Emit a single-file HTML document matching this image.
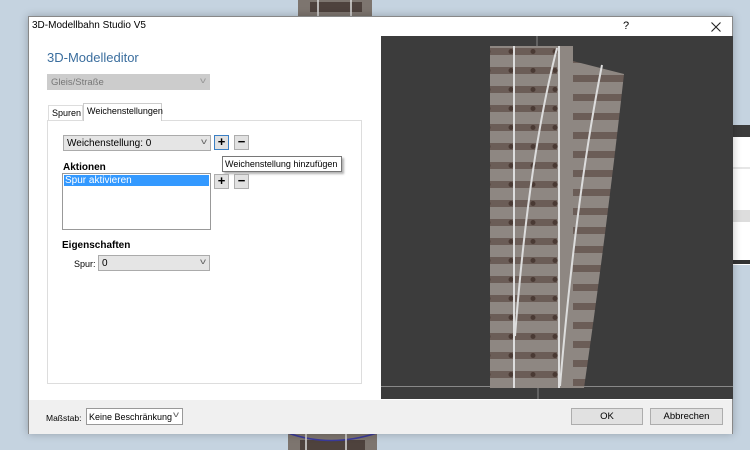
<!DOCTYPE html>
<html><head><meta charset="utf-8"><style>
*{margin:0;padding:0;box-sizing:border-box}
body{width:750px;height:450px;overflow:hidden;background:#c5d3e0;font-family:"Liberation Sans",sans-serif;font-size:9.5px;color:#000;position:relative}
.a{position:absolute}
.dlg{left:28px;top:16px;width:705px;height:418px;background:#fff;border:1px solid #888;box-shadow:0 0 8px rgba(0,0,0,.25)}
.btn{background:#e1e1e1;border:1px solid #adadad;text-align:center}
.combo{border:1px solid #ababab;background:#e5e5e5}
.chev{position:absolute;right:4px;top:1px;color:#666;font-size:8px;transform:scaleX(1.5)}
</style></head><body>
<svg class="a" style="left:0;top:0" width="750" height="450">
<rect x="298" y="0" width="74" height="16" fill="#7d756f"/>
<rect x="310" y="2" width="52" height="10" fill="#4e423d"/>
<line x1="318" y1="0" x2="318" y2="16" stroke="#ddd" stroke-width="1.5"/>
<line x1="351" y1="0" x2="351" y2="16" stroke="#ddd" stroke-width="1.5"/>
<rect x="288" y="434" width="89" height="16" fill="#7d756f"/>
<rect x="300" y="440" width="65" height="10" fill="#4e423d"/>
<path d="M288 433 Q330 448 377 433" stroke="#3a3a9a" fill="none" stroke-width="1.5"/>
<line x1="306" y1="434" x2="306" y2="450" stroke="#ddd" stroke-width="1.5"/>
<line x1="346" y1="434" x2="346" y2="450" stroke="#ddd" stroke-width="1.5"/>
<rect x="733" y="125" width="17" height="140" fill="#fff"/>
<rect x="733" y="125" width="17" height="12" fill="#3c3c3c"/>
<rect x="733" y="260" width="17" height="4" fill="#333"/>
<line x1="733" y1="168" x2="750" y2="168" stroke="#ccc"/>
<rect x="733" y="210" width="17" height="12" fill="#ddd"/>
</svg>
<div class="a dlg">
 <div class="a" style="left:3px;top:3px;font-size:10px">3D-Modellbahn Studio V5</div>
 <div class="a" style="left:594px;top:3px;font-size:11px">?</div>
 <svg class="a" style="left:682px;top:5px" width="10" height="10"><path d="M0.5 0.5L9.5 9.5M9.5 0.5L0.5 9.5" stroke="#222" stroke-width="1.1"/></svg>
 <div class="a" style="left:18px;top:33px;font-size:13px;color:#3b6e9e">3D-Modelleditor</div>
 <div class="a combo" style="left:18px;top:57px;width:163px;height:16px;border-color:#ccc;background:#ccc;color:#777;padding:2px 3px">Gleis/Straße<span class="chev" style="color:#999">v</span></div>
 <div class="a" style="left:19px;top:88px;width:35px;height:15px;border:1px solid #ddd;border-bottom:none;padding:2px 3px;background:#fff;font-size:9px">Spuren</div>
 <div class="a" style="left:54px;top:86px;width:79px;height:18px;border:1px solid #ccc;border-bottom:none;padding:2px 3px;background:#fff;z-index:2;font-size:9px">Weichenstellungen</div>
 <div class="a" style="left:18px;top:103px;width:315px;height:264px;border:1px solid #ddd"></div>
 <div class="a combo" style="left:34px;top:118px;width:148px;height:16px;padding:2px 3px;font-size:10px">Weichenstellung: 0<span class="chev">v</span></div>
 <div class="a btn" style="left:185px;top:118px;width:15px;height:15px;border:1px solid #3b7fc4;font-weight:bold;font-size:13px;line-height:12px">+</div>
 <div class="a btn" style="left:205px;top:118px;width:15px;height:15px;font-weight:bold;font-size:13px;line-height:12px">−</div>
 <div class="a" style="left:193px;top:139px;width:120px;height:16px;background:#fff;border:1px solid #777;box-shadow:2px 2px 2px rgba(0,0,0,.3);padding:2px 2px;white-space:nowrap;font-size:9px">Weichenstellung hinzufügen</div>
 <div class="a" style="left:34px;top:145px;font-weight:bold;font-size:10px">Aktionen</div>
 <div class="a" style="left:33px;top:156px;width:149px;height:57px;border:1px solid #999"><div style="margin:1px;background:#3399ff;color:#fff;height:11px;line-height:11px;padding-left:1px;font-size:10px">Spur aktivieren</div></div>
 <div class="a btn" style="left:185px;top:157px;width:15px;height:15px;font-weight:bold;font-size:13px;line-height:12px">+</div>
 <div class="a btn" style="left:205px;top:157px;width:15px;height:15px;font-weight:bold;font-size:13px;line-height:12px">−</div>
 <div class="a" style="left:33px;top:223px;font-weight:bold;font-size:10px">Eigenschaften</div>
 <div class="a" style="left:45px;top:242px;font-size:9px">Spur:</div>
 <div class="a combo" style="left:69px;top:238px;width:112px;height:16px;padding:2px 3px;font-size:10px">0<span class="chev">v</span></div>
 <svg class="a" style="left:352px;top:19px" width="352" height="363">
  <defs>
   <pattern id="sl" x="0" y="6" width="90" height="19" patternUnits="userSpaceOnUse">
    <rect x="0" y="0" width="90" height="19" fill="#8e8782"/>
    <rect x="12" y="6" width="74" height="7" fill="#6b5d57"/>
    <circle cx="17" cy="9.5" r="2.5" fill="#4a3a34"/><circle cx="40" cy="9.5" r="2.5" fill="#4a3a34"/>
    <circle cx="62" cy="9.5" r="2.5" fill="#4a3a34"/><circle cx="84" cy="9.5" r="2.5" fill="#4a3a34"/>
   </pattern>
   <pattern id="sl2" x="0" y="14" width="120" height="19" patternUnits="userSpaceOnUse">
    <rect x="0" y="0" width="120" height="19" fill="#8e8782"/>
    <rect x="0" y="6" width="120" height="7" fill="#6b5d57"/>
   </pattern>
  </defs>
  <rect width="352" height="363" fill="#3c3c3c"/>
  <line x1="156" y1="0" x2="156" y2="10" stroke="#888"/>
  <line x1="0" y1="350.5" x2="352" y2="350.5" stroke="#888"/>
  <line x1="157" y1="350" x2="157" y2="363" stroke="#888"/>
  <path d="M180 22 L243 38 Q225 200 203 352 L170 352 Z" fill="url(#sl2)"/>
  <path d="M109 10 L192 10 L192 352 L109 352 Z" fill="url(#sl)"/>
  <line x1="133" y1="10" x2="133" y2="352" stroke="#ddd" stroke-width="2"/>
  <line x1="178" y1="10" x2="178" y2="352" stroke="#ddd" stroke-width="2"/>
  <path d="M176 12 Q148 120 134 300" stroke="#ddd" stroke-width="2" fill="none"/>
  <path d="M221 29 Q195 160 179 350" stroke="#ddd" stroke-width="2" fill="none"/>
 </svg>
 <div class="a" style="left:0;top:383px;width:703px;height:34px;background:#f0f0f0"></div>
 <div class="a" style="left:17px;top:396px;font-size:8.5px">Maßstab:</div>
 <div class="a" style="left:57px;top:391px;width:97px;height:17px;border:1px solid #999;background:#fff;padding:3px 2px;font-size:9px;white-space:nowrap">Keine Beschränkung<span class="chev">v</span></div>
 <div class="a btn" style="left:542px;top:391px;width:72px;height:17px;line-height:15px">OK</div>
 <div class="a btn" style="left:621px;top:391px;width:73px;height:17px;line-height:15px">Abbrechen</div>
</div>
</body></html>
